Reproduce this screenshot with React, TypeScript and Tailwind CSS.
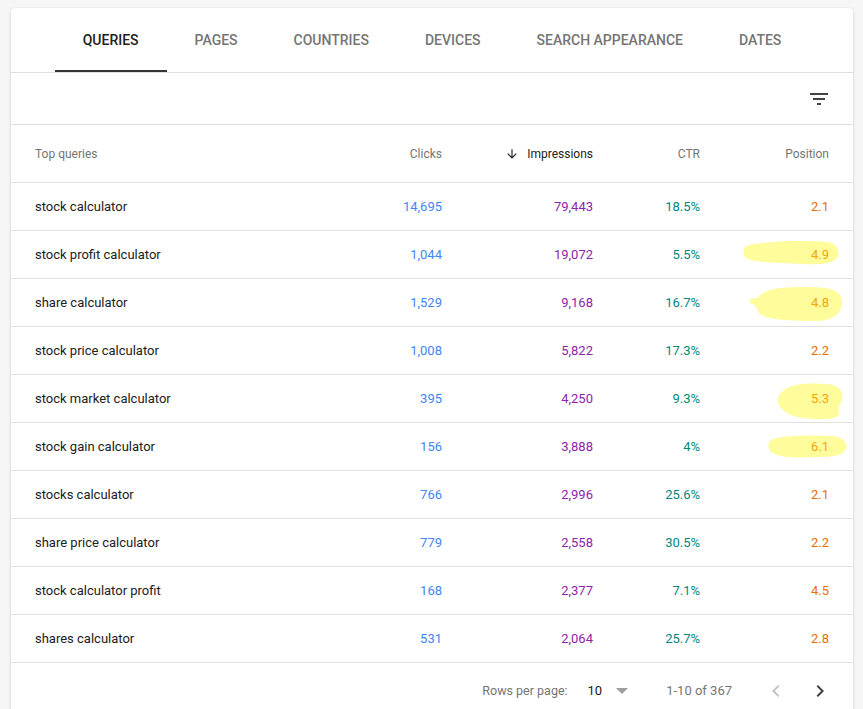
import React from 'react';

const tabs = ['Queries', 'Pages', 'Countries', 'Devices', 'Search appearance', 'Dates'];

const rows = [
  { query: 'stock calculator', clicks: '14,695', impressions: '79,443', ctr: '18.5%', position: '2.1' },
  { query: 'stock profit calculator', clicks: '1,044', impressions: '19,072', ctr: '5.5%', position: '4.9', mark: 1 },
  { query: 'share calculator', clicks: '1,529', impressions: '9,168', ctr: '16.7%', position: '4.8', mark: 2 },
  { query: 'stock price calculator', clicks: '1,008', impressions: '5,822', ctr: '17.3%', position: '2.2' },
  { query: 'stock market calculator', clicks: '395', impressions: '4,250', ctr: '9.3%', position: '5.3', mark: 3 },
  { query: 'stock gain calculator', clicks: '156', impressions: '3,888', ctr: '4%', position: '6.1', mark: 4 },
  { query: 'stocks calculator', clicks: '766', impressions: '2,996', ctr: '25.6%', position: '2.1' },
  { query: 'share price calculator', clicks: '779', impressions: '2,558', ctr: '30.5%', position: '2.2' },
  { query: 'stock calculator profit', clicks: '168', impressions: '2,377', ctr: '7.1%', position: '4.5' },
  { query: 'shares calculator', clicks: '531', impressions: '2,064', ctr: '25.7%', position: '2.8' },
];

// highlighter strokes someone drew over the position column
const Marker = ({ mark }: { mark: number }) => {
  if (mark === 1)
    return (
      <svg className="absolute right-[14px] top-[9px]" width="96" height="25" viewBox="0 0 96 25">
        <path d="M4,6 C20,1 60,0 84,2 C93,3 97,10 95,16 C93,23 80,25 60,24 C40,23 15,23 5,19 C-1,16 -1,8 4,6 Z" fill="#fff700" fillOpacity="0.39" />
      </svg>
    );
  if (mark === 2)
    return (
      <svg className="absolute right-[10px] top-[7px]" width="95" height="35" viewBox="0 0 95 35">
        <path d="M10,12 C16,3 30,1 60,1 C80,1 93,4 94,14 C95,25 88,34 70,35 C45,35 20,34 12,28 C9,24 8,20 7,19 C2,19 0,15 3,13 C5,12 8,12 10,12 Z" fill="#fff700" fillOpacity="0.39" />
      </svg>
    );
  if (mark === 3)
    return (
      <svg className="absolute right-[10px] top-[8px]" width="66" height="37" viewBox="0 0 66 37">
        <path d="M6,8 C14,0 35,0 50,1 C62,2 67,8 65,17 C64,22 60,24 62,28 C64,33 58,36 50,36 C30,37 10,34 3,24 C-1,18 1,12 6,8 Z" fill="#fff700" fillOpacity="0.39" />
      </svg>
    );
  return (
    <svg className="absolute right-[6px] top-[12px]" width="79" height="23" viewBox="0 0 79 23">
      <path d="M5,4 C18,0 45,0 65,1 C75,2 80,8 78,14 C76,20 66,22 50,22 C30,23 10,23 3,17 C-1,13 0,6 5,4 Z" fill="#fff700" fillOpacity="0.39" />
    </svg>
  );
};

const cols = 'grid grid-cols-[295px_112px_151px_107px_129px] px-6 items-center';

export default function App() {
  return (
    <div className="min-h-screen bg-[#f6f6f6] pt-2 pl-[11px] font-['Roboto','Liberation_Sans',sans-serif] overflow-hidden">
      <div className="w-[842px] bg-white shadow-[0_1px_3px_rgba(0,0,0,0.2)] rounded-t-sm">
        {/* tabs */}
        <div className="flex justify-center h-[65px] border-b border-[#e0e0e0]">
          {tabs.map((t, i) => (
            <div
              key={t}
              className={`px-[28px] pt-[2px] flex items-center text-sm font-medium uppercase border-b-2 ${
                i === 0 ? 'text-[#212121] border-[#333]' : 'text-[#757575] border-transparent'
              }`}
            >
              {t}
            </div>
          ))}
        </div>

        {/* toolbar */}
        <div className="h-[52px] border-b border-[#e0e0e0] flex items-center justify-end pr-[22px]">
          <svg width="24" height="24" viewBox="0 0 24 24" fill="#424242">
            <path d="M10 18h4v-2h-4v2zM3 6v2h18V6H3zm3 7h12v-2H6v2z" />
          </svg>
        </div>

        {/* header */}
        <div className={`${cols} h-[58px] border-b border-[#e0e0e0] text-xs text-[#757575]`}>
          <div>Top queries</div>
          <div className="text-right">Clicks</div>
          <div className="flex justify-end items-center gap-2 text-[#212121]">
            <svg width="14" height="14" viewBox="0 0 24 24" fill="#212121">
              <path d="M20 12l-1.41-1.41L13 16.17V4h-2v12.17l-5.58-5.59L4 12l8 8 8-8z" />
            </svg>
            Impressions
          </div>
          <div className="text-right">CTR</div>
          <div className="text-right">Position</div>
        </div>

        {/* rows */}
        {rows.map((r) => (
          <div key={r.query} className={`${cols} relative h-12 border-b border-[#e0e0e0] text-[13px]`}>
            <div className="text-[#212121]">{r.query}</div>
            <div className="text-right text-[#4285f4]">{r.clicks}</div>
            <div className="text-right text-[#8e24aa]">{r.impressions}</div>
            <div className="text-right text-[#00897b]">{r.ctr}</div>
            <div className="text-right text-[#e8710a]">{r.position}</div>
            {r.mark && <Marker mark={r.mark} />}
          </div>
        ))}

        {/* pagination */}
        <div className="h-14 flex items-center justify-end pr-[21px] text-[12.5px] text-[#757575]">
          <span>Rows per page:</span>
          <span className="ml-[20px] text-[13px] text-[#212121]">10</span>
          <svg className="ml-[14px]" width="12" height="6" viewBox="0 0 12 6" fill="#9e9e9e">
            <path d="M0 0h12L6 6z" />
          </svg>
          <span className="ml-[38px] text-[13px]">1-10 of 367</span>
          <svg className="ml-[32px]" width="24" height="24" viewBox="0 0 24 24" fill="#c4c4c4">
            <path d="M15.41 7.41L14 6l-6 6 6 6 1.41-1.41L10.83 12z" />
          </svg>
          <svg className="ml-5" width="24" height="24" viewBox="0 0 24 24" fill="#424242">
            <path d="M10 6L8.59 7.41 13.17 12l-4.58 4.59L10 18l6-6z" />
          </svg>
        </div>
      </div>
    </div>
  );
}
